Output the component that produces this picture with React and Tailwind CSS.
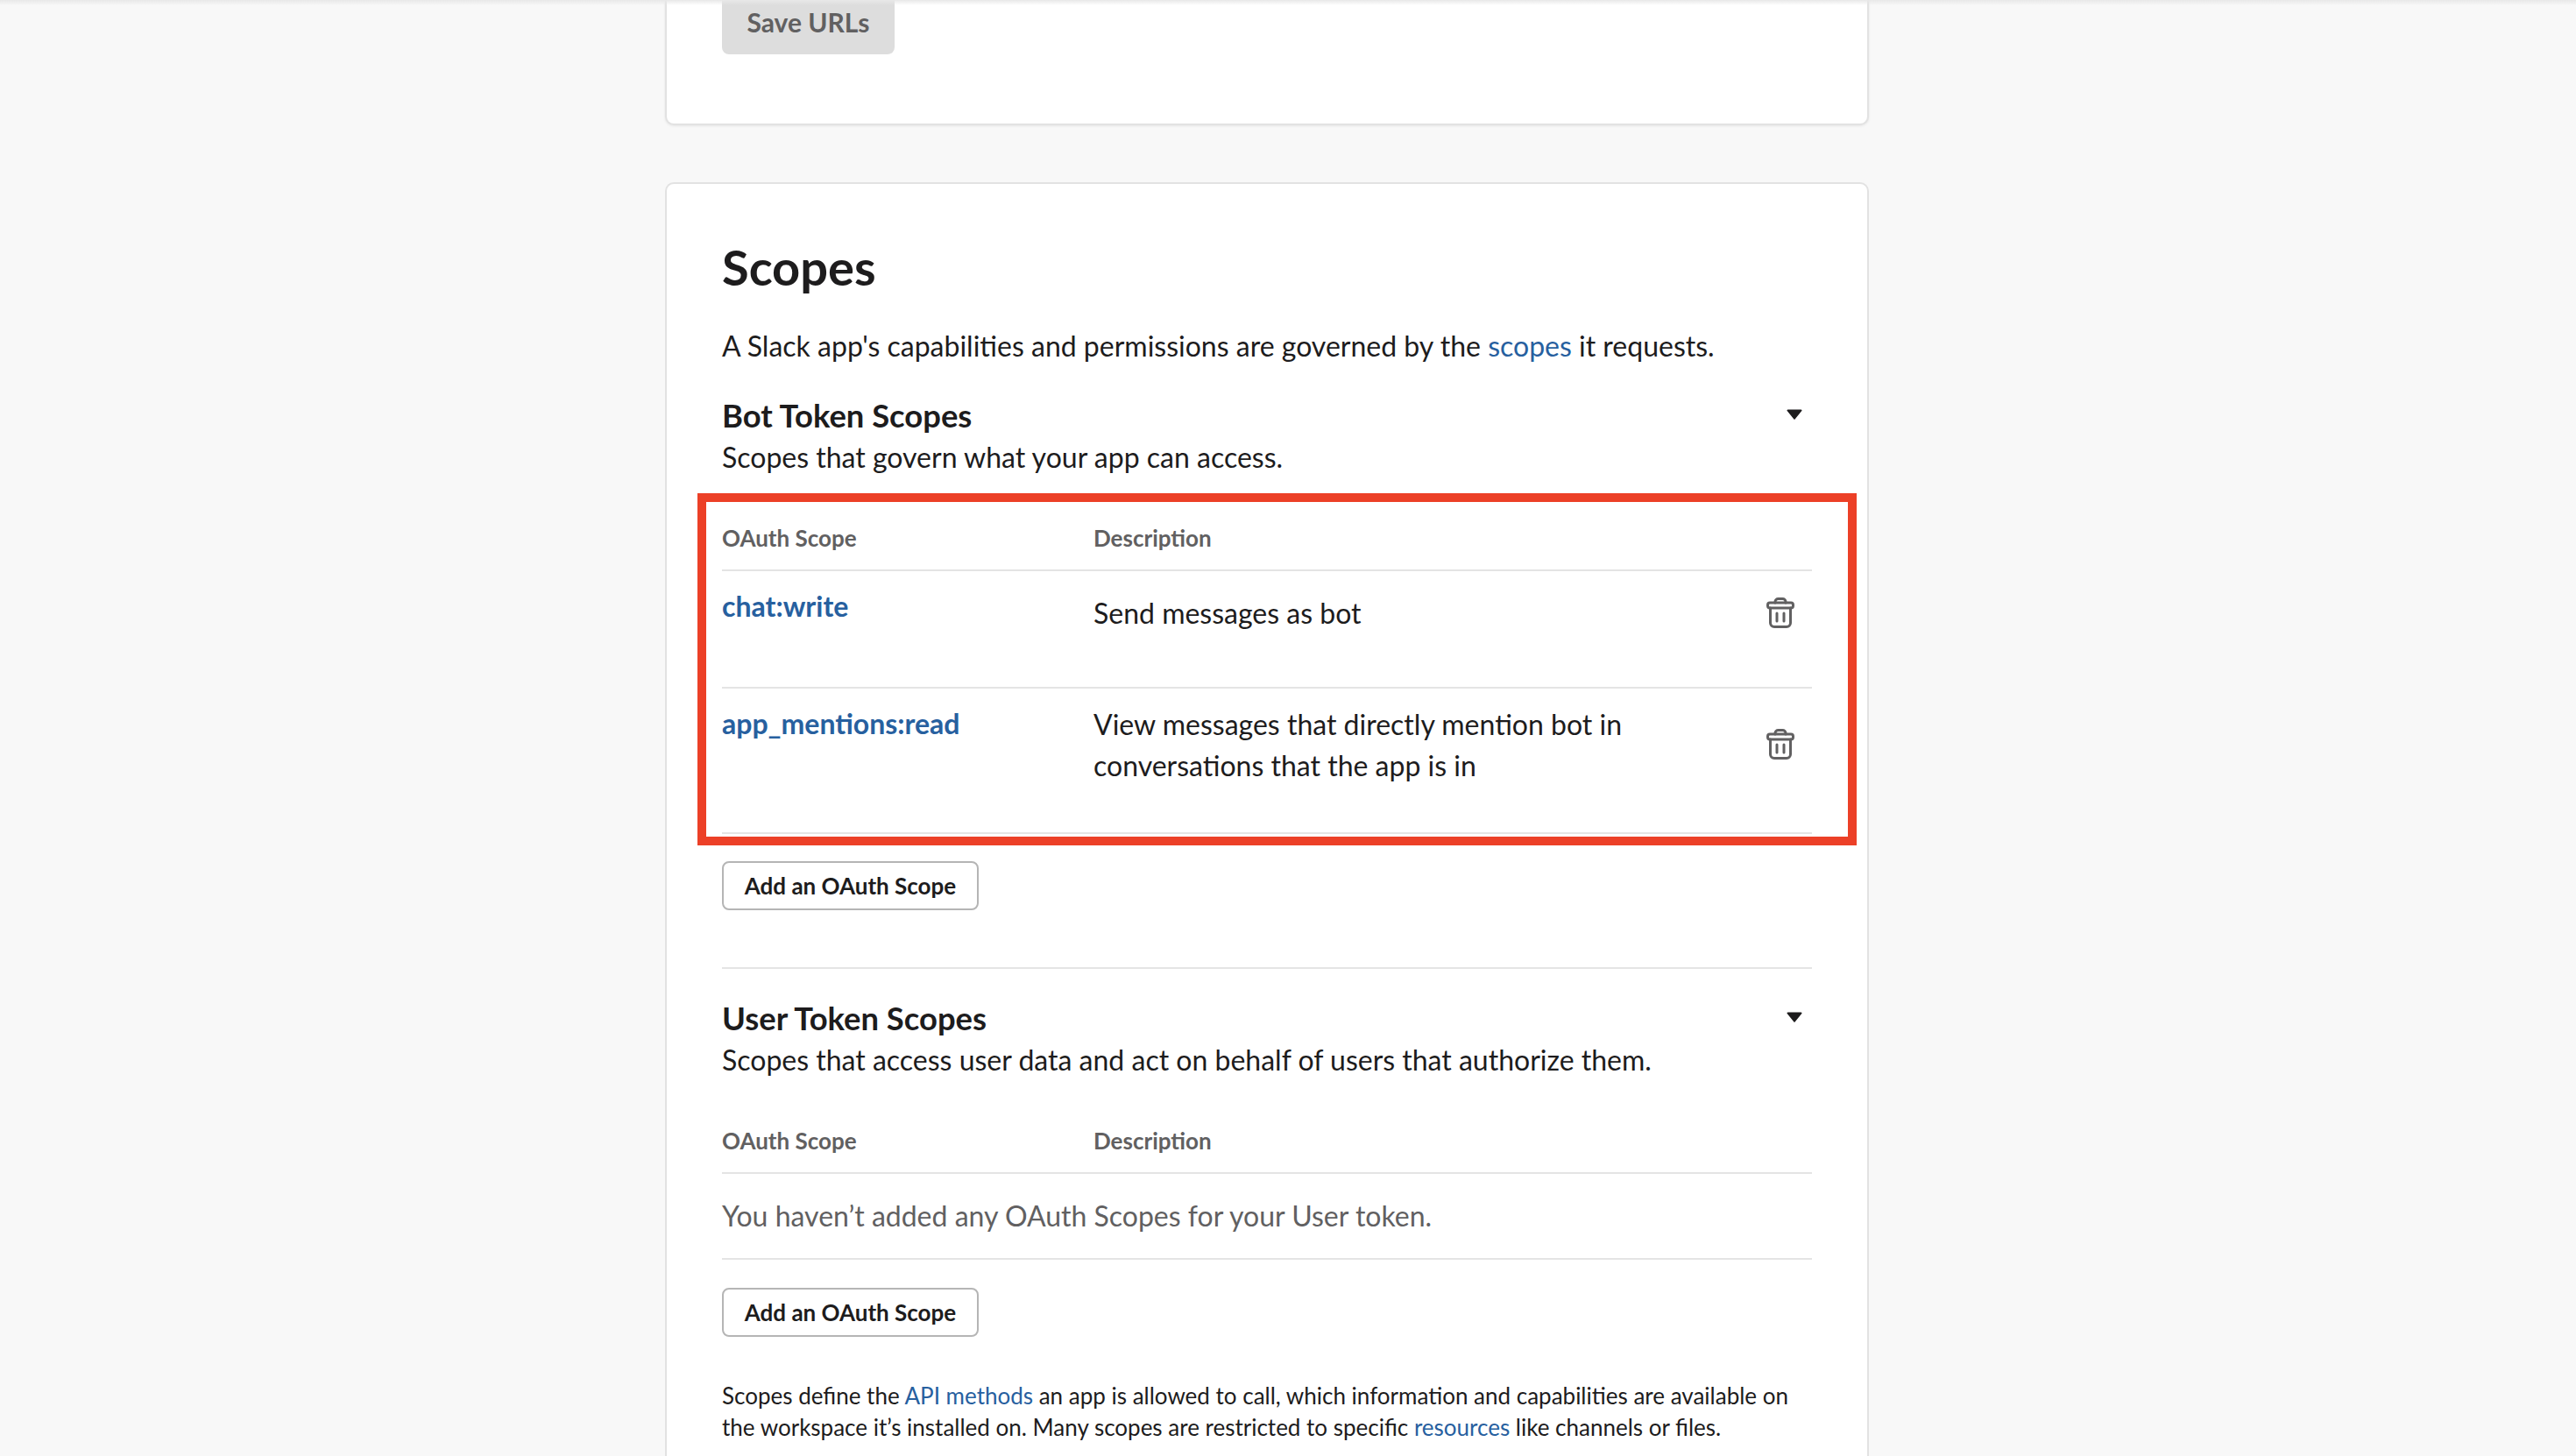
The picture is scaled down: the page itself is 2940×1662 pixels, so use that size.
const LINK = 'text-[#27609f]';

function TrashIcon() {
  return (
    <svg width="32" height="35" viewBox="0 0 32 35" fill="none" stroke="#616061" strokeWidth="3" strokeLinecap="round" strokeLinejoin="round">
      <path d="M10 6V5a3.5 3.5 0 0 1 3.5-3.5h5A3.5 3.5 0 0 1 22 5v1" />
      <rect x="1.5" y="6" width="29" height="6" rx="2.5" />
      <path d="M4.5 12V29a4.5 4.5 0 0 0 4.5 4.5h14a4.5 4.5 0 0 0 4.5-4.5V12" />
      <path d="M12 18v9M20 18v9" />
    </svg>
  );
}

function Caret() {
  return (
    <svg width="18" height="12" viewBox="0 0 18 12" className="mt-[17px] mr-[11px]">
      <path d="M1.5 0.5h15a1 1 0 0 1 .8 1.6L9.8 11.2a1 1 0 0 1-1.6 0L.7 2.1A1 1 0 0 1 1.5.5z" fill="#1d1c1d" />
    </svg>
  );
}

function SectionHead({ title, sub }) {
  return (
    <div className="flex justify-between items-start">
      <div>
        <h3 className="text-[36.4px] leading-[48px] font-bold text-[#1d1c1d]">{title}</h3>
        <p className="text-[32px] leading-[47px] text-[#1d1c1d]">{sub}</p>
      </div>
      <Caret />
    </div>
  );
}

function TableHead() {
  return (
    <div className="flex items-center h-[76px] pt-[2px] border-b-2 border-[#e4e4e4] text-[26px] font-bold text-[#616061]">
      <div className="w-[424px]">OAuth Scope</div>
      <div>Description</div>
    </div>
  );
}

function ScopeRow({ name, height, children }) {
  return (
    <div className={`flex border-b-2 border-[#e4e4e4] ${height}`}>
      <div className={`w-[424px] pt-[16px] text-[32px] leading-[47px] font-bold ${LINK}`}>{name}</div>
      <div className="flex-1 flex items-center justify-between pb-[37px] pr-[20px]">
        <div className="w-[640px] text-[32px] leading-[47px] text-[#1d1c1d]">{children}</div>
        <TrashIcon />
      </div>
    </div>
  );
}

function AddButton() {
  return (
    <button className="w-[293px] h-[56px] rounded-[8px] border-2 border-[#b5b5b5] bg-white text-[26px] font-bold text-[#1d1c1d]">
      Add an OAuth Scope
    </button>
  );
}

export default function App() {
  return (
    <div className="relative h-[1662px] overflow-hidden bg-[#f8f8f8] font-['Lato','Liberation_Sans',sans-serif]">
      {/* header shadow */}
      <div className="absolute top-0 inset-x-0 h-[6px] bg-gradient-to-b from-[#e8e8e8] to-transparent z-10" />

      <div className="w-[1374px] ml-[759px] flex flex-col gap-[65px]">
        <div className="h-[143px] px-[63px] bg-white border-x-2 border-b-2 border-[#e2e2e2] rounded-b-[10px] shadow-[0_1px_3px_rgba(0,0,0,0.08)]">
          <button className="block w-[197px] h-[74px] -mt-[12px] rounded-[8px] bg-[#dddddd] text-[30px] font-bold text-[#616061]">
            Save URLs
          </button>
        </div>

        <div className="px-[63px] pt-[55px] pb-[120px] bg-white border-2 border-[#e2e2e2] rounded-[10px]">
          <h2 className="text-[56px] leading-[80px] font-bold text-[#1d1c1d]">Scopes</h2>
          <p className="mt-[26px] text-[32px] leading-[47px] text-[#1d1c1d]">
            A Slack app's capabilities and permissions are governed by the <span className={LINK}>scopes</span> it requests.
          </p>
          <div className="mt-[32px]">
            <SectionHead title="Bot Token Scopes" sub="Scopes that govern what your app can access." />
          </div>

          <div className="relative mt-[31px]">
            <TableHead />
            <ScopeRow name="chat:write" height="h-[134px]">Send messages as bot</ScopeRow>
            <ScopeRow name="app_mentions:read" height="h-[166px]">
              View messages that directly mention bot in conversations that the app is in
            </ScopeRow>
            {/* annotation box from the screenshot */}
            <div className="absolute -left-[28px] -right-[51px] -top-[13px] -bottom-[13px] border-[10px] border-[#ec4027] pointer-events-none" />
          </div>

          <div className="mt-[31px] pb-[65px] border-b-2 border-[#e4e4e4]">
            <AddButton />
          </div>

          <div className="mt-[32px]">
            <SectionHead title="User Token Scopes" sub="Scopes that access user data and act on behalf of users that authorize them." />
          </div>

          <div className="mt-[31px]">
            <TableHead />
            <div className="h-[98px] flex items-center border-b-2 border-[#e4e4e4] text-[32px] text-[#616061]">
              You haven’t added any OAuth Scopes for your User token.
            </div>
          </div>

          <div className="mt-[32px]">
            <AddButton />
          </div>

          <p className="mt-[49px] text-[26px] leading-[36px] text-[#1d1c1d]">
            Scopes define the <span className={LINK}>API methods</span> an app is allowed to call, which information and capabilities are available on the workspace it’s installed on. Many scopes are restricted to specific <span className={LINK}>resources</span> like channels or files.
          </p>
        </div>
      </div>
    </div>
  );
}
